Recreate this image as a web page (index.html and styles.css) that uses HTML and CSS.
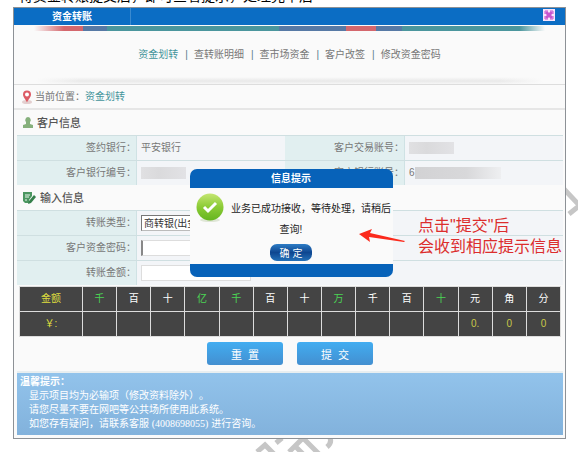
FILE: index.html
```html
<!DOCTYPE html>
<html lang="zh-CN">

<head>
    <meta charset="UTF-8">
    <meta name="viewport" content="width=device-width, initial-scale=1.0">
    <title>资金转账</title>
    <link rel="stylesheet" href="styles.css">
</head>

<body>
    <svg class="watermark wm-right" width="20" height="32" viewBox="0 0 20 32">
        <path d="M0 2 L16 19 M5 27 L15 19" />
    </svg>
    <svg class="watermark wm-bottom" width="84" height="24" viewBox="0 0 84 24">
        <path d="M4 18 L12 11 L30 29 M23 9 L29 4 M36 18 L50 4 L72 26 M42 12 L56 26 M76 2 Q80 8 74 13" />
    </svg>

    <p class="intro"><span>待资金转账提交后，即可查看提示，处理完毕后</span></p>

    <div class="window">
        <header class="titlebar">
            <h1>资金转账</h1>
            <button class="close" type="button" aria-label="关闭">
                <svg width="12" height="12" viewBox="0 0 12 12">
                    <path d="M3 3 L9 9 M9 3 L3 9" />
                    <path class="thin" d="M2 5 V2 H5 M7 2 H10 V5 M10 7 V10 H7 M5 10 H2 V7" />
                </svg>
            </button>
        </header>
        <div class="strip"></div>

        <nav class="menu">
            <a class="on" href="#">资金划转</a>
            <a href="#">查转账明细</a>
            <a href="#">查市场资金</a>
            <a href="#">客户改签</a>
            <a href="#">修改资金密码</a>
        </nav>

        <div class="location">
            <svg width="10" height="14" viewBox="0 0 10 14">
                <ellipse cx="5" cy="12" rx="5" ry="2" fill="#e3cfcf" />
                <path d="M5 12.500C4 9.500 1 7.500 1 4.500a4 4 0 0 1 8 0C9 7.500 6 9.500 5 12.500Z" fill="#dc5a64" />
                <circle cx="5" cy="4.500" r="2" fill="#fff" />
            </svg>
            <span>当前位置：<a href="#">资金划转</a></span>
        </div>

        <form class="panel">
            <h2>
                <svg width="10" height="11" viewBox="0 0 10 11">
                    <path d="M5 0a3 3 0 0 1 2 5v2l3 1v3H0V8l3-1V5A3 3 0 0 1 5 0Z" fill="#86b07c" />
                </svg>
                客户信息
            </h2>
            <div class="row">
                <span class="label">签约银行：</span>
                <span class="value">平安银行</span>
                <span class="label">客户交易账号：</span>
                <span class="value"><i class="mask short"></i></span>
            </div>
            <div class="row">
                <span class="label">客户银行编号：</span>
                <span class="value"><i class="mask short"></i></span>
                <span class="label">客户银行账号：</span>
                <span class="value">6<i class="mask long"></i></span>
            </div>
            <h2>
                <svg width="13" height="12" viewBox="0 0 13 12">
                    <path d="M0 0H9V4L6 8V11H2L0 9Z" fill="#4b9660" />
                    <path d="M2 3H7M2 5H6M2 8H4" stroke="#eef6ee" fill="none" />
                    <path d="M6 9L11 3L13 5L8 11L5 12Z" fill="#357f4b" />
                </svg>
                输入信息
            </h2>
            <div class="row wide">
                <label class="label" for="type">转账类型：</label>
                <span class="value"><select id="type"><option>商转银(出金)</option></select></span>
            </div>
            <div class="row wide">
                <label class="label" for="pwd">客户资金密码：</label>
                <span class="value"><input class="caret" id="pwd" type="password"></span>
            </div>
            <div class="row wide">
                <label class="label" for="money">转账金额：</label>
                <span class="value"><input id="money" type="text"></span>
            </div>

            <table class="amount">
                <tr>
                    <th class="first">金额</th>
                    <th class="green">千</th>
                    <th>百</th>
                    <th>十</th>
                    <th class="green">亿</th>
                    <th class="green">千</th>
                    <th>百</th>
                    <th>十</th>
                    <th class="green">万</th>
                    <th>千</th>
                    <th>百</th>
                    <th class="green">十</th>
                    <th>元</th>
                    <th>角</th>
                    <th>分</th>
                </tr>
                <tr>
                    <td class="first">￥:</td>
                    <td></td>
                    <td></td>
                    <td></td>
                    <td></td>
                    <td></td>
                    <td></td>
                    <td></td>
                    <td></td>
                    <td></td>
                    <td></td>
                    <td></td>
                    <td>0.</td>
                    <td>0</td>
                    <td>0</td>
                </tr>
            </table>

            <div class="actions">
                <button type="reset">重&nbsp; 置</button>
                <button type="button">提&nbsp; 交</button>
            </div>
        </form>

        <section class="tips">
            <h3>温馨提示：</h3>
            <p>显示项目均为必输项（修改资料除外）。</p>
            <p>请您尽量不要在网吧等公共场所使用此系统。</p>
            <p>如您存有疑问，请联系客服 <span>(4008698055)</span> 进行咨询。</p>
        </section>

        <div class="dialog" role="dialog" aria-labelledby="dialog-title">
            <h2 id="dialog-title">信息提示</h2>
            <div class="dialog-body">
                <svg class="ok-icon" width="28" height="30" viewBox="0 0 28 30">
                    <defs>
                        <linearGradient id="ball" x1="0" y1="0" x2="0" y2="1">
                            <stop offset="0" stop-color="#c5e672" />
                            <stop offset="0.5" stop-color="#8bcb35" />
                            <stop offset="1" stop-color="#65b51f" />
                        </linearGradient>
                    </defs>
                    <ellipse cx="14" cy="27" rx="10" ry="2" fill="#dfe6d6" />
                    <circle cx="14" cy="14" r="13.500" fill="url(#ball)" />
                    <path d="M8 14L12 18L20 10" stroke="#fff" stroke-width="3" fill="none" />
                </svg>
                <p>业务已成功接收，等待处理，请稍后查询!</p>
                <button type="button">确 定</button>
            </div>
        </div>

        <div class="note">
            <svg width="46" height="14" viewBox="0 0 46 14">
                <path d="M0 5L13 0L11 4L46 12L45 13L10 8L11 13Z" fill="#fb2a1c" />
            </svg>
            <p>点击"提交"后<br>会收到相应提示信息</p>
        </div>
    </div>
</body>

</html>
```
FILE: styles.css
```css
* {
    padding: 0;
    margin: 0;
    box-sizing: border-box;
}

body {
    position: relative;
    padding: 0 12px 0 13px;
    background: #fff;
    color: #777;
    font-family: "Liberation Sans", "Noto Sans CJK SC", sans-serif;
    font-size: 10px;
    line-height: 14px;
    text-spacing-trim: space-all;
    min-height: 100vh;
    overflow: hidden;
}

a {
    color: inherit;
    text-decoration: none;
}

.watermark {
    position: absolute;
    fill: none;
    stroke: #c6c6c6;
    stroke-width: 5;
}

.wm-right {
    right: -6px;
    top: 187px;
}

.wm-bottom {
    left: 253px;
    top: 434px;
}

/* tail of the paragraph above the window */
.intro {
    display: flex;
    align-items: flex-end;
    height: 3px;
    margin-bottom: 4px;
    padding-left: 6px;
    overflow: hidden;
    color: #000;
    font-size: 14px;
    white-space: nowrap;
}

.window {
    position: relative;
    border: 1px solid #8d9196;
    background: #fafafa;
    padding-bottom: 3px;
}

.titlebar {
    display: flex;
    justify-content: space-between;
    height: 17px;
    background: #0b6dc4;
}

.titlebar h1 {
    width: 117px;
    border-right: 1px solid #3a8ad0;
    color: #fff;
    font-size: 10px;
    line-height: 17px;
    text-align: center;
}

.close {
    width: 12px;
    height: 12px;
    margin: 1px 10px 0 0;
    border: 0;
    background: #f8e4fb;
}

.close svg {
    display: block;
    fill: none;
    stroke: #c555cf;
    stroke-width: 3;
}

.close .thin {
    stroke-width: 1;
}

.strip {
    height: 5px;
    margin: 1px 20px 0;
    background: linear-gradient(90deg, transparent 0, #d4676d 30px, #d4676d 49px, #5779a5 49px, #5779a5 73px, #4b969d 73px, #4b969d 48%, #5779a5 48%, #5779a5 61%, #d4676d 61%, #d4676d 67%, #5779a5 67%, #5779a5 72%, #4b969d 72%, #4b969d 95%, transparent 100%);
}

.menu {
    display: flex;
    justify-content: center;
    height: 54px;
    padding-top: 17px;
    background: linear-gradient(90deg, #fafafa 4%, transparent 12%, transparent 88%, #fafafa 96%), linear-gradient(#fafafa 46px, #e9e9e9 50px, #fafafa 54px);
    border-bottom: 1px solid #ddd;
}

.menu a + a::before {
    content: "|";
    margin: 0 6px 0 7px;
    color: #587a8a;
}

.menu .on,
.location a {
    color: #43949b;
}

.location {
    display: flex;
    align-items: center;
    gap: 3px;
    height: 25px;
    padding-left: 8px;
    border-bottom: 2px solid #e6e6e6;
}

.panel {
    margin: 0 2px 0 3px;
}

.panel h2 {
    display: flex;
    align-items: center;
    gap: 4px;
    height: 25px;
    padding-left: 6px;
    color: #555;
    font-size: 11px;
    font-weight: 500;
}

.row {
    display: grid;
    grid-template-columns: 120px 1fr 120px 158px;
    height: 25px;
    border-top: 1px solid #cfdfe1;
    background: #f3f5f8;
}

.row.wide {
    grid-template-columns: 120px 1fr;
}

.label {
    border-right: 1px solid #cfe2e4;
    background: #e1eff0;
    line-height: 24px;
    text-align: right;
}

.value {
    display: flex;
    align-items: center;
    padding-left: 4px;
}

.mask {
    height: 12px;
    background: linear-gradient(90deg, #e0e0e2, #dadadc 40%, #e2e2e5);
}

.mask.short {
    width: 45px;
}

.mask.long {
    width: 86px;
    background: linear-gradient(90deg, #d2d2d4, #d8d8da 60%, #eeeff1);
}

.value input,
.value select {
    width: 110px;
    height: 16px;
    border: 1px solid #ddd;
    background: #fff;
    color: #333;
    font-family: inherit;
    font-size: 10px;
}

.value select {
    appearance: none;
    padding-left: 2px;
    border-color: #777 #bbb #bbb #777;
}

.value .caret {
    border-left: 2px solid #888;
}

.amount {
    width: calc(100% - 4px);
    margin: 1px 0 0 2px;
    table-layout: fixed;
    border-collapse: collapse;
    background: #444;
}

.amount th,
.amount td {
    height: 25px;
    border: 1px solid #ddd;
    color: #fff;
    font-weight: 400;
    text-align: center;
}

.amount td {
    color: #c9c748;
}

.amount .first {
    width: 63px;
    color: #dede3e;
}

.amount .green {
    color: #4bd454;
}

.actions {
    display: flex;
    justify-content: center;
    gap: 14px;
    height: 36px;
    padding-top: 5px;
    border-bottom: 2px solid #e8eef0;
}

.actions button {
    width: 76px;
    height: 23px;
    border: 0;
    border-radius: 3px;
    background: linear-gradient(#42adf1, #438fd0);
    color: #fff;
    font-family: inherit;
    font-size: 11px;
}

.tips {
    margin: 0 2px 0 3px;
    padding: 1px 3px 4px;
    background: linear-gradient(#92c3eb, #82b2dc);
    color: #fff;
}

.tips h3 {
    font-size: 10px;
    line-height: 15px;
}

.tips p {
    padding-left: 9px;
}

.tips span {
    font-family: "Liberation Serif", serif;
}

.dialog {
    position: absolute;
    top: 161px;
    left: calc(50% - 100px);
    width: 203px;
    padding-bottom: 13px;
    border-radius: 7px;
    background: #0762b9;
    color: #222;
}

.dialog h2 {
    color: #fff;
    font-size: 10px;
    line-height: 19px;
    text-align: center;
}

.dialog-body {
    position: relative;
    height: 76px;
    padding-top: 10px;
    background: #fafafa;
    text-align: center;
}

.ok-icon {
    position: absolute;
    left: 6px;
    top: 5px;
}

.dialog p {
    line-height: 21px;
    text-indent: 40px;
}

.dialog button {
    width: 42px;
    height: 17px;
    margin-top: 4px;
    border: 0;
    border-radius: 7px;
    background: linear-gradient(#2d7cc5, #0e4690 50%, #2370b8);
    color: #fff;
    font-family: inherit;
    font-size: 10px;
}

/* red callout next to the dialog */
.note {
    position: absolute;
    top: 207px;
    right: 3px;
    display: flex;
    gap: 13px;
    color: #dc2d2d;
    font-size: 16px;
    line-height: 21px;
}

.note svg {
    margin-top: 14px;
}
```
